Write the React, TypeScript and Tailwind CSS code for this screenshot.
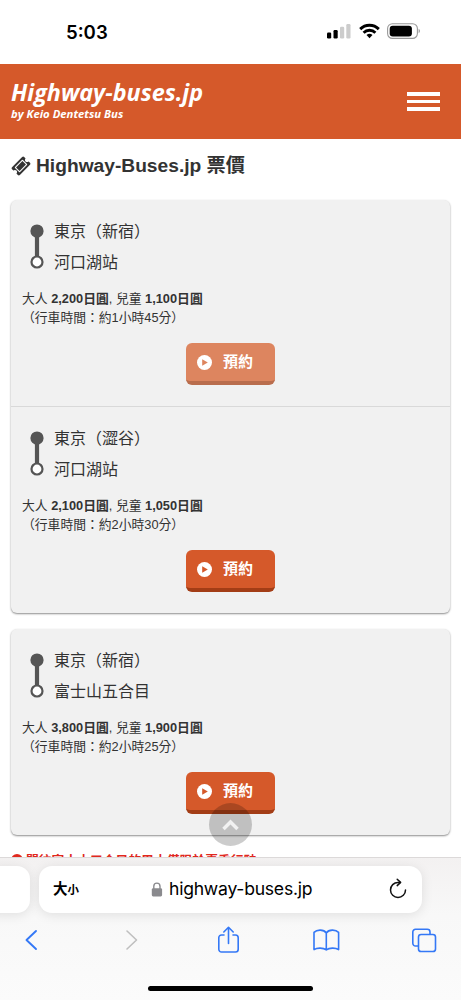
import { BsFillExclamationCircleFill } from 'react-icons/bs';

type Trip = {
  from: string;
  to: string;
  adult: string;
  child: string;
  time: string;
  pressed?: boolean;
};

const groups: Trip[][] = [
  [
    { from: '東京（新宿）', to: '河口湖站', adult: '2,200', child: '1,100', time: '約1小時45分', pressed: true },
    { from: '東京（澀谷）', to: '河口湖站', adult: '2,100', child: '1,050', time: '約2小時30分' },
  ],
  [{ from: '東京（新宿）', to: '富士山五合目', adult: '3,800', child: '1,900', time: '約2小時25分' }],
];

function StatusBar() {
  return (
    <div className="flex h-16 shrink-0 items-start justify-between pr-[40px] pl-[66px]">
      <span className="mt-[19px] font-['Inter',sans-serif] text-[18.6px] leading-[26px] font-semibold text-black">5:03</span>
      <div className="mt-[23px] flex items-start">
        <svg width="24" height="16" viewBox="0 0 24 16">
          <rect x="0" y="9.5" width="4.2" height="6" rx="1.2" fill="#000" />
          <rect x="6.5" y="7" width="4.2" height="8.5" rx="1.2" fill="#000" />
          <rect x="13" y="3.8" width="4.2" height="11.7" rx="1.2" fill="#ccc" />
          <rect x="19.3" y="1" width="4.2" height="14.5" rx="1.2" fill="#ccc" />
        </svg>
        <svg width="21" height="16" viewBox="0 0 21 16" className="ml-[8px]" fill="none" stroke="#000" strokeWidth="2.9">
          <path d="M1.2 6.1a13.2 13.2 0 0 1 18.6 0" />
          <path d="M4.6 9.7a8.4 8.4 0 0 1 11.8 0" />
          <path d="M10.5 15.3l-3-3.2a4.3 4.3 0 0 1 6 0z" fill="#000" stroke="none" />
        </svg>
        <svg width="34" height="16" viewBox="0 0 34 16" className="ml-[7px]">
          <rect x="0.6" y="0.8" width="29.8" height="14.6" rx="4.8" fill="none" stroke="#999" strokeWidth="1.1" />
          <rect x="2.7" y="2.8" width="22.2" height="10.6" rx="3" fill="#000" />
          <path d="M31.6 5.8c1.8.8 1.8 3.6 0 4.4z" fill="#999" />
        </svg>
      </div>
    </div>
  );
}

function Header() {
  return (
    <header className="flex h-[75px] shrink-0 items-start justify-between bg-[#d5592a] pr-[21px] pl-[11px] text-white">
      <div className="pt-[12px] font-['Open_Sans',sans-serif] font-bold italic">
        <div className="text-[23.3px] leading-[32px] whitespace-nowrap">Highway-buses.jp</div>
        <div className="text-[11.3px] leading-[12px] whitespace-nowrap">by Keio Dentetsu Bus</div>
      </div>
      <div className="mt-[28px] flex w-[33px] flex-col gap-[4px]">
        <span className="h-[3.5px] bg-white" />
        <span className="h-[3.5px] bg-white" />
        <span className="h-[3.5px] bg-white" />
      </div>
    </header>
  );
}

function TripRow({ trip }: { trip: Trip }) {
  return (
    <div className="pt-[16px] pb-[21px]">
      <div className="flex pl-[19px]">
        <svg width="14" height="46" viewBox="0 0 14 46" className="mt-[8px]">
          <path d="M7 7v26" stroke="#555" strokeWidth="4.2" />
          <circle cx="7" cy="7" r="6.6" fill="#555" />
          <circle cx="7" cy="38" r="5.5" fill="#fff" stroke="#555" strokeWidth="2.2" />
        </svg>
        <div className="ml-[10px] text-[16px] leading-[31px]">
          <div>{trip.from}</div>
          <div>{trip.to}</div>
        </div>
      </div>
      <div className="mt-[11px] pl-[11px] text-[12.8px] leading-[19px]">
        <div>
          大人 <b>{trip.adult}日圓</b>, 兒童 <b>{trip.child}日圓</b>
        </div>
        <div>（行車時間：{trip.time}）</div>
      </div>
      <button
        className={`mx-auto mt-[16px] flex h-[42px] w-[89px] items-center rounded-[6px] border-b-4 pl-[11px] text-white ${
          trip.pressed ? 'border-[#b96d4d] bg-[#dd855f]' : 'border-[#a33d16] bg-[#d5592a]'
        }`}
      >
        <svg width="15" height="15" viewBox="0 0 15 15">
          <circle cx="7.5" cy="7.5" r="7.5" fill="#fff" />
          <path d="M5.2 4.3l5.6 3.2-5.6 3.2z" fill={trip.pressed ? '#dd855f' : '#d5592a'} />
        </svg>
        <span className="ml-[11px] text-[15px] leading-[20px] font-bold">預約</span>
      </button>
    </div>
  );
}

function BrowserBar() {
  return (
    <footer className="absolute inset-x-0 bottom-0 h-[143px] overflow-hidden border-t border-[#dcd9d9] bg-gradient-to-b from-[#f3f1f1] via-[#f8f8f8] via-40% to-[#fbfbfb]">
      <div className="mt-[8px] flex gap-[9px]">
        <div className="-ml-4 h-[47px] w-[46px] shrink-0 rounded-[13px] bg-white shadow-[0_2px_12px_rgba(0,0,0,0.1)]" />
        <div className="flex h-[47px] w-[383px] shrink-0 items-center rounded-[13px] bg-white pr-[15px] pl-[14px] text-black shadow-[0_2px_12px_rgba(0,0,0,0.1)]">
          <span className="flex w-[27px] items-baseline font-bold">
            <span className="text-[14.5px]">大</span>
            <span className="text-[11.5px]">小</span>
          </span>
          <svg width="12" height="15" viewBox="0 0 12 15" className="ml-[71px]">
            <path d="M2.8 7V4.2a3.1 3.1 0 0 1 6.2 0V7" fill="none" stroke="#8a8a8e" strokeWidth="1.4" />
            <rect x="0.8" y="6.2" width="10.3" height="8.3" rx="1.4" fill="#8a8a8e" />
          </svg>
          <span className="ml-[6px] font-['Inter',sans-serif] text-[17.6px] tracking-[-0.25px] whitespace-nowrap">highway-buses.jp</span>
          <svg width="18" height="22" viewBox="0 0 18 22" className="mb-[2px] ml-auto" fill="none" stroke="#111" strokeWidth="1.5" strokeLinecap="round" strokeLinejoin="round">
            <path d="M11.2 4.4H9a7.5 7.5 0 1 0 7.5 7.5" />
            <path d="M8.2 1.3l3.4 3.1-3.4 3.2" />
          </svg>
        </div>
      </div>
      <svg width="461" height="40" viewBox="0 0 461 40" className="mt-[6px]" fill="none" stroke="#3478f6" strokeWidth="1.6" strokeLinecap="round" strokeLinejoin="round">
        <path d="M36 12l-9.5 9 9.5 9" strokeWidth="1.9" />
        <path d="M127 12l9.5 9-9.5 9" stroke="#bfbfbf" strokeWidth="1.6" />
        <path d="M224 16h-2.5a2.7 2.7 0 0 0-2.7 2.7v11.6a2.7 2.7 0 0 0 2.7 2.7h14a2.7 2.7 0 0 0 2.7-2.7V18.7a2.7 2.7 0 0 0-2.7-2.7H233" />
        <path d="M228.5 24.5V8.5M223.8 13l4.7-4.7 4.7 4.7" />
        <path d="M326.3 14c-2.5-3.7-9.3-3.7-12.3-.6v17.2c3-2 9.3-2 12.3.3 3-2.3 9.3-2.3 12.3-.3V13.4c-3-3.1-9.8-3.1-12.3.6zM326.3 14v17" />
        <rect x="418.5" y="15.5" width="17" height="17" rx="2.6" />
        <path d="M418 27h-2.5a2.7 2.7 0 0 1-2.7-2.7V13a2.7 2.7 0 0 1 2.7-2.7h11.8a2.7 2.7 0 0 1 2.7 2.7v2" />
      </svg>
      <div className="mx-auto mt-[27px] h-[5px] w-[165px] rounded-full bg-black" />
    </footer>
  );
}

export default function App() {
  return (
    <div className="relative flex h-[1000px] w-[461px] flex-col overflow-hidden bg-white font-['Liberation_Sans','Noto_Sans_CJK_TC',sans-serif] text-[#333]">
      <StatusBar />
      <Header />
      <main className="px-[11px]">
        <h1 className="mt-[13px] flex h-[28px] items-center text-[19.2px] leading-[28px] font-bold whitespace-nowrap">
          <svg width="20" height="20" viewBox="0 0 1792 1792" className="mr-[5px]" fill="#333">
            <path d="M1024 452l316 316-572 572-316-316zm-211 979l618-618q19-19 19-45t-19-45l-362-362q-18-18-45-18t-45 18l-618 618q-19 19-19 45t19 45l362 362q18 18 45 18t45-18zm889-637l-907 908q-37 37-90.5 37t-90.5-37l-126-126q56-56 56-136t-56-136-136-56-136 56l-125-126q-37-37-37-90.5t37-90.5l907-906q37-37 90.5-37t90.5 37l125 125q-56 56-56 136t56 136 136 56 136-56l126 125q37 37 37 90.5t-37 90.5z" />
          </svg>
          Highway-Buses.jp 票價
        </h1>
        <div className="mt-[20px] flex flex-col gap-4">
          {groups.map((group, i) => (
            <section
              key={i}
              className="divide-y divide-[#d9d9d9] rounded-[6px] bg-[#f1f1f1] shadow-[0_1px_2px_rgba(0,0,0,0.45)]"
            >
              {group.map(trip => (
                <TripRow key={trip.from} trip={trip} />
              ))}
            </section>
          ))}
        </div>
        <p className="mt-[16px] flex items-center gap-[3px] text-[12.8px] leading-[20px] font-bold whitespace-nowrap text-[#e0281e]">
          <BsFillExclamationCircleFill size={12} className="-mt-[2px]" />
          開往富士山五合目的巴士僅限於夏季行駛
        </p>
      </main>
      <button className="absolute top-[803px] left-[209px] flex size-[43px] items-center justify-center rounded-full bg-black/20">
        <svg width="17" height="12" viewBox="0 0 17 12" fill="none" stroke="#f1f1f1" strokeWidth="3.5">
          <path d="M1.5 10l7-7 7 7" />
        </svg>
      </button>
      <BrowserBar />
    </div>
  );
}
